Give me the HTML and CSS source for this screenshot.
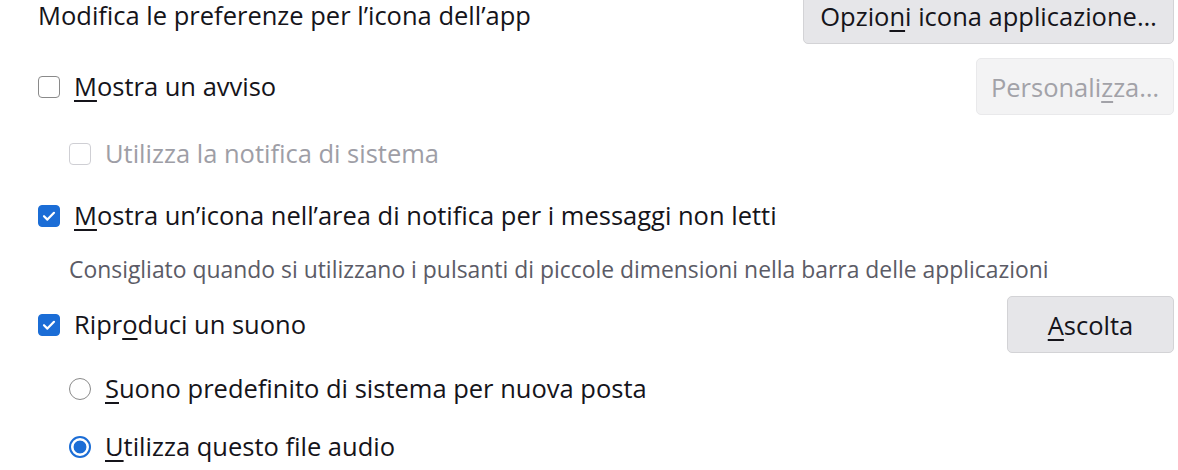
FILE: index.html
```html
<!DOCTYPE html>
<html lang="it">
<head>
<meta charset="utf-8">
<title>Preferenze</title>
<link rel="stylesheet" href="styles.css">
</head>
<body>
<div class="pane">
  <div class="row r1">
    <span class="label">Modifica le preferenze per l’icona dell’app</span>
    <button class="btn btn-wide">Opzio<u>n</u>i icona applicazione…</button>
  </div>
  <div class="row r2">
    <label class="check"><span class="box"></span><span class="label"><u>M</u>ostra un avviso</span></label>
    <button class="btn btn-dis" disabled>Personali<u>z</u>za…</button>
  </div>
  <div class="row r3 indent">
    <label class="check disabled"><span class="box"></span><span class="label">Utilizza la notifica di sistema</span></label>
  </div>
  <div class="row r4">
    <label class="check"><span class="box on"><svg viewBox="0 0 22 22" width="22" height="22"><path d="M6 11.2 L9.4 14.6 L16 7.8" fill="none" stroke="#fff" stroke-width="2.2" stroke-linecap="round" stroke-linejoin="round"/></svg></span><span class="label"><u>M</u>ostra un’icona nell’area di notifica per i messaggi non letti</span></label>
  </div>
  <div class="row r5 indent">
    <span class="hint">Consigliato quando si utilizzano i pulsanti di piccole dimensioni nella barra delle applicazioni</span>
  </div>
  <div class="row r6">
    <label class="check"><span class="box on"><svg viewBox="0 0 22 22" width="22" height="22"><path d="M6 11.2 L9.4 14.6 L16 7.8" fill="none" stroke="#fff" stroke-width="2.2" stroke-linecap="round" stroke-linejoin="round"/></svg></span><span class="label">Ripr<u>o</u>duci un suono</span></label>
    <button class="btn btn-play"><u>A</u>scolta</button>
  </div>
  <div class="row r7 indent">
    <label class="check"><span class="radio"></span><span class="label"><u>S</u>uono predefinito di sistema per nuova posta</span></label>
  </div>
  <div class="row r8 indent">
    <label class="check"><span class="radio on"></span><span class="label"><u>U</u>tilizza questo file audio</span></label>
  </div>
</div>
</body>
</html>
```
FILE: styles.css
```css
html, body {
  margin: 0;
  padding: 0;
  background: #ffffff;
}
body {
  font-family: "Open Sans", "Noto Sans", "Liberation Sans", sans-serif;
  font-size: 25.5px;
  color: #15141a;
  overflow: hidden;
  height: 470px;
}
.pane {
  padding: 0 4px 0 38px;
  display: flex;
  flex-direction: column;
}
.row {
  display: flex;
  align-items: center;
  justify-content: space-between;
}
.indent { padding-left: 31px; }
.r1 { height: 57px; margin-top: -13px; }
.r2 { height: 57px; margin-top: 14px; }
.r3 { height: 40px; margin-top: 19px; }
.r4 { height: 40px; margin-top: 22px; }
.r5 { height: 30px; margin-top: 19px; }
.r6 { height: 57px; margin-top: 11px; }
.r7 { height: 40px; margin-top: 16px; }
.r8 { height: 40px; margin-top: 18px; }
.label {
  white-space: nowrap;
  line-height: 1;
}
u {
  text-decoration-thickness: 2px;
  text-underline-offset: 4px;
}
.check {
  display: flex;
  align-items: center;
  gap: 14px;
}
.box {
  width: 22px;
  height: 22px;
  box-sizing: border-box;
  border: 1px solid #8a8a8a;
  border-radius: 4px;
  background: #fff;
  flex: none;
  display: block;
}
.box svg { display: block; margin: -1px; }
.box.on {
  background: #1b6dd6;
  border-color: #1b6dd6;
}
.disabled { color: #9e9ea6; }
.disabled .box { border-color: #cfcfd4; }
.radio {
  width: 22px;
  height: 22px;
  box-sizing: border-box;
  border: 1px solid #8a8a8a;
  border-radius: 50%;
  flex: none;
  display: block;
}
.radio.on {
  border: 2px solid #1b6dd6;
  background: radial-gradient(circle, #1b6dd6 0 6px, #ffffff 6.8px);
}
.hint {
  font-size: 22.9px;
  color: #5b5b66;
  white-space: nowrap;
  line-height: 1;
}
.btn {
  font: inherit;
  color: #15141a;
  background: #e6e6e9;
  border: 1px solid #d3d3d6;
  border-radius: 5px;
  height: 57px;
  padding: 0 10px;
  white-space: nowrap;
  box-sizing: border-box;
}
.btn-wide { width: 371px; }
.btn-dis {
  width: 198px;
  background: #f3f3f4;
  border-color: #e9e9eb;
  color: #a2a2a8;
}
.btn-play { width: 167px; }
```
